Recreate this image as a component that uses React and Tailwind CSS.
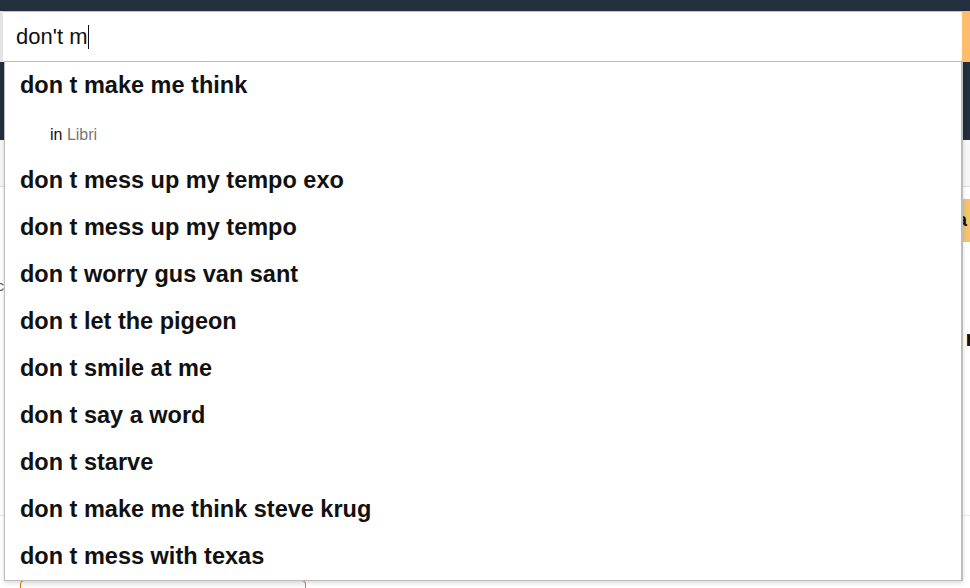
import React from 'react';

const suggestions = [
  'don t mess up my tempo exo',
  'don t mess up my tempo',
  'don t worry gus van sant',
  'don t let the pigeon',
  'don t smile at me',
  'don t say a word',
  'don t starve',
  'don t make me think steve krug',
  'don t mess with texas',
];

export default function App() {
  return (
    <div className="relative w-[970px] h-[588px] overflow-hidden bg-white font-['Liberation_Sans',Arial,sans-serif]">
      {/* Page behind the dropdown */}
      <div className="flex flex-col">
        <div className="h-[11px] bg-[#232f3e]" />
        <div className="flex h-[51px] bg-[#232f3e]">
          <div className="w-[3px] bg-[#e4e4e4]" />
          <div className="flex-1 flex items-center bg-white border-t border-[#f6b867] pl-[13px]">
            <span className="text-[22px] text-[#111] leading-none">don't m</span>
            <span className="ml-[1px] w-px h-[24px] bg-[#111]" />
          </div>
          <div className="w-[8px] bg-[#febd69]" />
        </div>
        <div className="h-[78px] bg-[#232f3e]" />
        <div className="h-[47px] bg-[#f7f7f7] border-b border-[#dddddd]" />
        <div className="flex justify-end pt-[12px]">
          <div className="w-[10px] h-[43px] bg-[#f3c46d] flex items-center text-[18px] font-bold text-[#111] overflow-hidden">
            <span className="-ml-[3px]">a</span>
          </div>
        </div>
        <div className="flex justify-between items-start pt-[34px]">
          <span className="-ml-[3px] text-[14px] text-[#555]">c</span>
          <span className="mt-[46px] -mr-[4px] text-[22px] font-bold text-[#111]">r</span>
        </div>
        <div className="mt-[160px] border-t border-[#e7e7e7]" />
        <div className="flex pl-[20px] mt-[64px]">
          <div className="w-[286px] h-[20px] rounded-t-[4px] border border-[#e77600] bg-[#fafafa]" />
        </div>
      </div>

      {/* Autocomplete dropdown */}
      <div className="absolute left-[4px] top-[61px] w-[959px] h-[520px] bg-white border border-[#bdbdbd] border-r-2 shadow-[0_2px_4px_rgba(0,0,0,0.15)]">
        <div className="h-[46px] flex items-center pl-[15px] pt-[2px] text-[23.5px] font-bold text-[#111]">
          don t make me think
        </div>
        <div className="h-[48px] flex items-center pl-[45px] pt-[6px] text-[16px] text-[#111]">
          in&nbsp;<span className="text-[#767676]">Libri</span>
        </div>
        {suggestions.map((s) => (
          <div key={s} className="h-[47px] flex items-center pl-[15px] pt-[2px] text-[23.5px] font-bold text-[#111]">
            {s}
          </div>
        ))}
      </div>
    </div>
  );
}
